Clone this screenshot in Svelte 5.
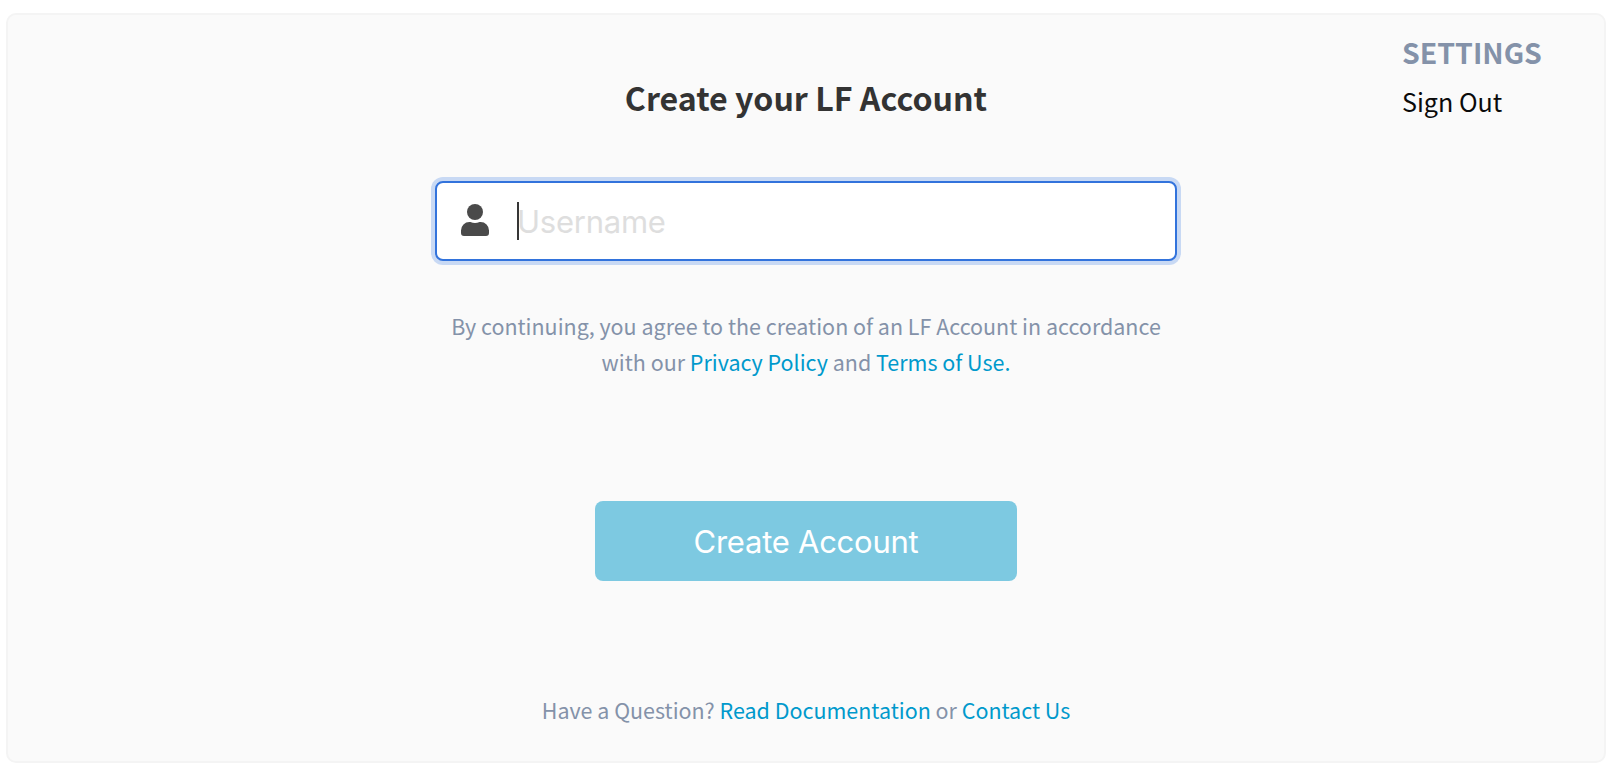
<script lang="ts">
  let username = $state('');
</script>

<main class="card">
  <section class="account">
    <h1>Create your LF Account</h1>

    <label class="field">
      <svg class="user" viewBox="0 0 28 32" aria-hidden="true">
        <circle cx="14" cy="8" r="8" />
        <path d="M8.4 18h1.05a10.9 10.9 0 0 0 9.1 0h1.05A8.4 8.4 0 0 1 28 26.4V29a3 3 0 0 1-3 3H3a3 3 0 0 1-3-3v-2.600A8.400 8.400 0 0 1 8.400 18z" />
      </svg>
      <span class="caret"></span>
      <input type="text" placeholder="Username" bind:value={username} />
    </label>

    <p class="terms">
      <span class="line">By continuing, you agree to the creation of an LF Account in accordance</span>
      <span class="line">with our <a href="#privacy">Privacy Policy</a> and <a href="#terms">Terms of Use.</a></span>
    </p>

    <button type="button">Create Account</button>

    <p class="help">Have a Question? <a href="#docs">Read Documentation</a> or <a href="#contact">Contact Us</a></p>
  </section>

  <nav class="settings">
    <h2>SETTINGS</h2>
    <a href="#signout">Sign Out</a>
  </nav>
</main>

<style>
  :global(body) {
    background: #fff;
  }
  .card {
    box-sizing: border-box;
    width: 1600px;
    height: 750px;
    margin: 13px 0 0 6px;
    border: 2px solid #f4f4f4;
    border-radius: 10px;
    background: #fafafa;
    display: grid;
    grid-template-columns: 1fr 742px 1fr;
    font-family: 'Noto Sans CJK SC', 'Noto Sans', sans-serif;
    overflow: hidden;
  }
  .account {
    grid-column: 2;
    display: flex;
    flex-direction: column;
    align-items: center;
  }
  h1 {
    margin: 59px 0 0;
    font-size: 32.15px;
    line-height: 46px;
    font-weight: 700;
    color: #333;
    white-space: nowrap;
  }
  .field {
    box-sizing: border-box;
    width: 742px;
    height: 80px;
    margin-top: 61px;
    padding-left: 24px;
    display: flex;
    align-items: center;
    background: #fff;
    border: 2px solid #3273dc;
    border-radius: 8px;
    box-shadow: 0 0 0 4px #c8d9f4;
  }
  .user {
    width: 28px;
    height: 32px;
    margin-top: -2px;
    fill: #4a4a4a;
    flex: none;
  }
  .caret {
    width: 2px;
    height: 38px;
    margin-left: 28px;
    background: #363636;
  }
  input {
    flex: 1;
    min-width: 0;
    height: 60px;
    margin: 0 0 0 -2px;
    padding: 0;
    border: 0;
    outline: 0;
    background: transparent;
    color: #363636;
    font-family: Inter, sans-serif;
    font-size: 31px;
    letter-spacing: -0.25px;
  }
  input::placeholder {
    color: #dedede;
    opacity: 1;
  }
  p {
    margin: 0;
    font-size: 21.47px;
    line-height: 36px;
    color: #8492a9;
    text-align: center;
    white-space: nowrap;
  }
  .line {
    display: block;
  }
  p a {
    color: #0099cc;
    text-decoration: none;
  }
  .terms {
    margin-top: 47px;
  }
  button {
    width: 422px;
    height: 80px;
    margin: 121px 0 0;
    padding: 0;
    border: 0;
    border-radius: 8px;
    background: #7dc9e1;
    color: #fff;
    font-family: Inter, sans-serif;
    font-size: 31px;
    font-weight: 400;
    letter-spacing: -0.25px;
  }
  .help {
    margin-top: 111px;
  }
  .settings {
    grid-column: 3;
    padding: 17px 0 0 225px;
    white-space: nowrap;
  }
  h2 {
    margin: 0;
    font-size: 28.5px;
    line-height: 40px;
    font-weight: 700;
    color: #8492a9;
  }
  .settings a {
    display: block;
    margin-top: 9px;
    font-size: 25.1px;
    line-height: 40px;
    color: #0a0a0a;
    text-decoration: none;
  }
</style>
